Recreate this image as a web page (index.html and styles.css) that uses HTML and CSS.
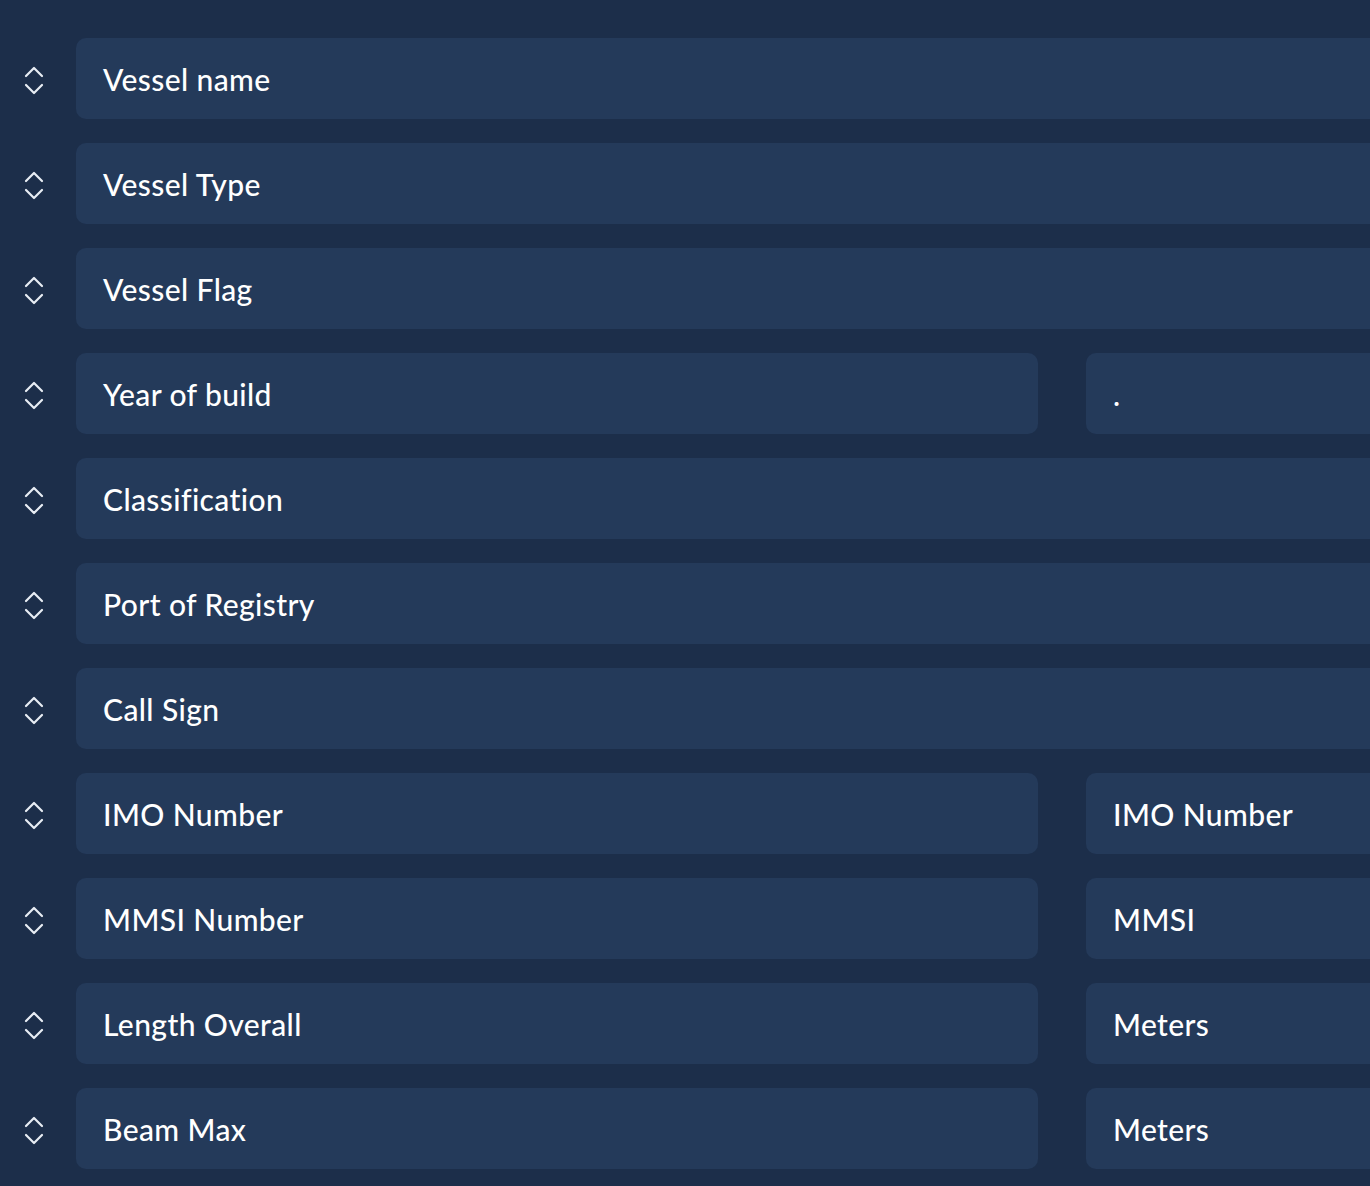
FILE: index.html
```html
<!DOCTYPE html>
<html lang="en">
<head>
<meta charset="utf-8">
<title>Vessel details</title>
<link rel="stylesheet" href="styles.css">
</head>
<body>
<div class="form">
  <div class="row">
    <span class="handle"><svg viewBox="0 0 20 30" width="20" height="30"><path d="M2 10 L10 2 L18 10 M2 19 L10 27 L18 19" fill="none" stroke="currentColor" stroke-width="2.2" stroke-linecap="round" stroke-linejoin="round"/></svg></span>
    <div class="field full">Vessel name</div>
  </div>
  <div class="row">
    <span class="handle"><svg viewBox="0 0 20 30" width="20" height="30"><path d="M2 10 L10 2 L18 10 M2 19 L10 27 L18 19" fill="none" stroke="currentColor" stroke-width="2.2" stroke-linecap="round" stroke-linejoin="round"/></svg></span>
    <div class="field full">Vessel Type</div>
  </div>
  <div class="row">
    <span class="handle"><svg viewBox="0 0 20 30" width="20" height="30"><path d="M2 10 L10 2 L18 10 M2 19 L10 27 L18 19" fill="none" stroke="currentColor" stroke-width="2.2" stroke-linecap="round" stroke-linejoin="round"/></svg></span>
    <div class="field full">Vessel Flag</div>
  </div>
  <div class="row">
    <span class="handle"><svg viewBox="0 0 20 30" width="20" height="30"><path d="M2 10 L10 2 L18 10 M2 19 L10 27 L18 19" fill="none" stroke="currentColor" stroke-width="2.2" stroke-linecap="round" stroke-linejoin="round"/></svg></span>
    <div class="field label">Year of build</div>
    <div class="field unit">.</div>
  </div>
  <div class="row">
    <span class="handle"><svg viewBox="0 0 20 30" width="20" height="30"><path d="M2 10 L10 2 L18 10 M2 19 L10 27 L18 19" fill="none" stroke="currentColor" stroke-width="2.2" stroke-linecap="round" stroke-linejoin="round"/></svg></span>
    <div class="field full">Classification</div>
  </div>
  <div class="row">
    <span class="handle"><svg viewBox="0 0 20 30" width="20" height="30"><path d="M2 10 L10 2 L18 10 M2 19 L10 27 L18 19" fill="none" stroke="currentColor" stroke-width="2.2" stroke-linecap="round" stroke-linejoin="round"/></svg></span>
    <div class="field full">Port of Registry</div>
  </div>
  <div class="row">
    <span class="handle"><svg viewBox="0 0 20 30" width="20" height="30"><path d="M2 10 L10 2 L18 10 M2 19 L10 27 L18 19" fill="none" stroke="currentColor" stroke-width="2.2" stroke-linecap="round" stroke-linejoin="round"/></svg></span>
    <div class="field full">Call Sign</div>
  </div>
  <div class="row">
    <span class="handle"><svg viewBox="0 0 20 30" width="20" height="30"><path d="M2 10 L10 2 L18 10 M2 19 L10 27 L18 19" fill="none" stroke="currentColor" stroke-width="2.2" stroke-linecap="round" stroke-linejoin="round"/></svg></span>
    <div class="field label">IMO Number</div>
    <div class="field unit">IMO Number</div>
  </div>
  <div class="row">
    <span class="handle"><svg viewBox="0 0 20 30" width="20" height="30"><path d="M2 10 L10 2 L18 10 M2 19 L10 27 L18 19" fill="none" stroke="currentColor" stroke-width="2.2" stroke-linecap="round" stroke-linejoin="round"/></svg></span>
    <div class="field label">MMSI Number</div>
    <div class="field unit">MMSI</div>
  </div>
  <div class="row">
    <span class="handle"><svg viewBox="0 0 20 30" width="20" height="30"><path d="M2 10 L10 2 L18 10 M2 19 L10 27 L18 19" fill="none" stroke="currentColor" stroke-width="2.2" stroke-linecap="round" stroke-linejoin="round"/></svg></span>
    <div class="field label">Length Overall</div>
    <div class="field unit">Meters</div>
  </div>
  <div class="row">
    <span class="handle"><svg viewBox="0 0 20 30" width="20" height="30"><path d="M2 10 L10 2 L18 10 M2 19 L10 27 L18 19" fill="none" stroke="currentColor" stroke-width="2.2" stroke-linecap="round" stroke-linejoin="round"/></svg></span>
    <div class="field label">Beam Max</div>
    <div class="field unit">Meters</div>
  </div>
</div>
</body>
</html>
```
FILE: styles.css
```css
html, body {
  margin: 0;
  padding: 0;
  background: #1c2e4a;
  overflow: hidden;
}
body {
  font-family: "Lato", "Noto Sans", sans-serif;
  color: #ffffff;
}
.form {
  width: 1700px;
  padding-top: 38px;
  display: flex;
  flex-direction: column;
  gap: 24px;
}
.row {
  display: flex;
  align-items: stretch;
  gap: 48px;
  height: 81px;
}
.handle {
  width: 76px;
  margin-right: -48px;
  display: flex;
  align-items: center;
  justify-content: flex-start;
  padding-left: 24px;
  padding-top: 4px;
  box-sizing: border-box;
  color: #e8edf4;
}
.handle svg {
  width: 20px;
  height: 30px;
}
.field {
  background: #243a5a;
  border-radius: 10px;
  display: flex;
  align-items: center;
  padding-left: 27px;
  box-sizing: border-box;
  font-size: 30px;
  font-weight: 500;
  letter-spacing: 0.4px;
}
.full {
  flex: 1;
}
.label {
  width: 962px;
  flex: none;
}
.unit {
  flex: 1;
}
```
